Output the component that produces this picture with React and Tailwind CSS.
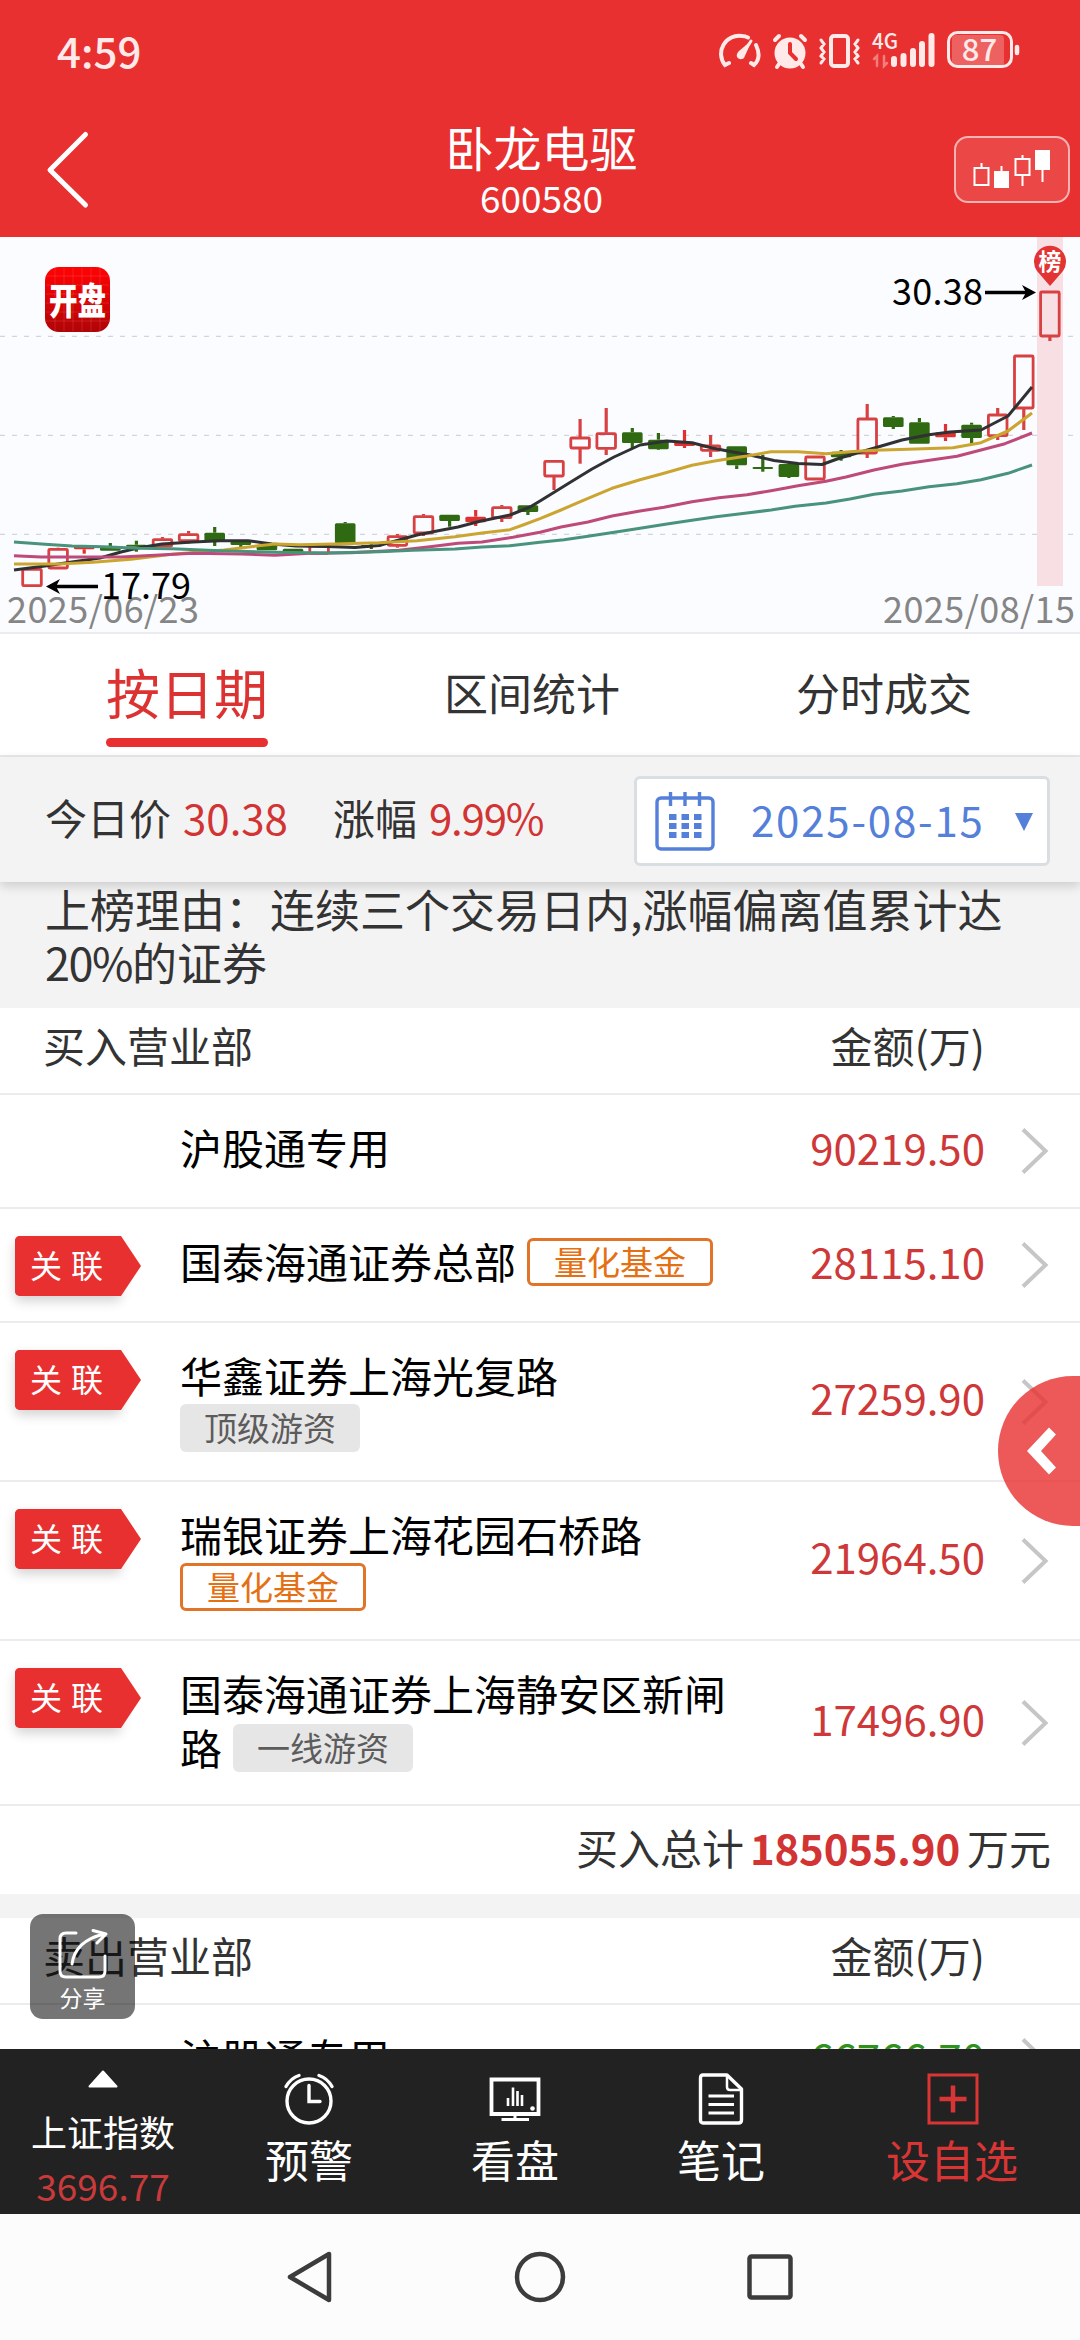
const FONT = "font-['Noto_Sans_CJK_SC','Noto_Sans',sans-serif]";

function StatusBar() {
  return (
    <div className="flex h-[104px] items-center justify-between pl-[57px] pr-[57px] text-[#ffe9e9]">
      <span className="pb-[4px] text-[42px] leading-none font-medium">4:59</span>
      <svg width="304" height="44" viewBox="0 0 304 44" fill="none" stroke="#ffe9e9" strokeLinecap="round">
        <g transform="translate(0 2)" strokeWidth="4">
          <path d="M10 31 L6 33 A18 18 0 0 1 23 4 Q26 4 29 5.500" />
          <path d="M37 13 Q43 26 35 33 L32 31" />
          <path d="M32 9 L23 23" strokeWidth="3" />
          <path d="M33 8 L25 26 Q21 29 18 25 Q17 22 20 19 Z" fill="#ffe9e9" stroke="none" />
        </g>
        <g transform="translate(54 2)">
          <circle cx="17" cy="21" r="15.500" fill="#ffe9e9" stroke="none" />
          <path d="M2 8 L6 4 M32 8 L28 4 M6 32 L4 35 M28 32 L30 35" strokeWidth="4" />
          <path d="M17 12 V21 L23 27" stroke="#e83030" strokeWidth="4" />
        </g>
        <g transform="translate(100 2)">
          <rect x="12" y="4" width="17" height="30" rx="3" strokeWidth="4" />
          <path d="M2 8 L5 12 L2 16 L5 20 L2 24 L5 27 L2 31 M39 8 L36 12 L39 16 L36 20 L39 24 L36 27 L39 31" strokeWidth="3" />
        </g>
        <text x="153" y="19" fontSize="22" fontWeight="500" fill="#ffe9e9" stroke="none" textLength="26" lengthAdjust="spacingAndGlyphs">4G</text>
        <path d="M155 29 L158 26 V36 M165 26 V36 L168 33" stroke="#f27e7e" strokeWidth="2.500" />
        <path d="M175 28 V33 M184.500 25 V33 M194 20 V33 M203 13 V33 M212.500 5 V33" transform="translate(0 1)" strokeWidth="6" />
        <rect x="233" y="5" width="52" height="32" rx="4" fill="#ee6161" stroke="none" />
        <rect x="229.500" y="2.500" width="63" height="34" rx="9" strokeWidth="3" />
        <path d="M298 17 V23" strokeWidth="4.500" />
        <text x="260.500" y="31" fontSize="31" fontWeight="500" textAnchor="middle" fill="#ffe9e9" stroke="none">87</text>
      </svg>
    </div>
  );
}

function Header() {
  return (
    <header className="h-[237px] bg-[#e83030] text-white">
      <StatusBar />
      <div className="flex h-[133px] items-start justify-between pr-[10px] pl-[44px]">
        <svg className="mt-[26px] mr-[37px]" width="48" height="80" viewBox="0 0 48 80" fill="none" stroke="#fff" strokeWidth="5" strokeLinecap="round" strokeLinejoin="round">
          <path d="M41.500 4.500 L6 40 L41.500 75" />
        </svg>
        <div className="flex flex-col items-center">
          <h1 className="mt-[14px] text-[48px] leading-[56px]">卧龙电驱</h1>
          <span className="mt-[3px] text-[37px] leading-[40px]">600580</span>
        </div>
        <svg className="mt-[32px]" width="116" height="67" viewBox="0 0 116 67">
          <rect x="1" y="1" width="114" height="65" rx="13" fill="#eb4747" stroke="#f6b3b3" strokeWidth="2" />
          <g fill="none" stroke="#fff" strokeWidth="2">
            <path d="M20.500 32 H34.500 V49 H20.500 Z M27.500 32 V27 M61.500 23 H75.500 V39 H61.500 Z M68.500 23 V19 M68.500 39 V50" />
            <path d="M40 35 H55 V52 H40 Z M81 14 H96 V34 H81 Z" fill="#fff" stroke="none" />
            <path d="M47.500 36 V30 M88.500 30 V46" />
          </g>
        </svg>
      </div>
    </header>
  );
}

// kind (r: hollow red, R: solid red, g: green), body top, body bottom, wick high, wick low
const candles = [
  ["r", 331.3, 349.7, 331.3, 349.7], ["r", 311.3, 332, 310.7, 332], ["R", 308.3, 312.3, 308.3, 316.7],
  ["g", 309, 313.7, 306, 313.7], ["g", 307.7, 309.7, 303.7, 314.7], ["r", 301.7, 310, 300, 310],
  ["r", 296.7, 304.7, 294, 306.3], ["g", 295.7, 304.3, 290, 309], ["g", 304.3, 308, 303, 310.7],
  ["g", 307.7, 313.3, 307.7, 313.3], ["g", 311.7, 317.3, 311.7, 317.3], ["r", 308, 317.3, 307, 317.3],
  ["g", 286.3, 306.3, 285, 306.3], ["g", 308, 309.7, 306.3, 312], ["r", 298.7, 309.3, 297, 310.7],
  ["r", 278.7, 297, 277, 299], ["g", 277.7, 284, 277.7, 289.7], ["R", 279.7, 285.3, 273, 289],
  ["r", 269.7, 281.7, 268, 285], ["g", 268.3, 275, 268.3, 278], ["r", 223.3, 240, 223.3, 253],
  ["r", 200, 212, 182, 226.7], ["r", 195.7, 212.3, 171, 218], ["g", 195.3, 206, 191, 211.7],
  ["g", 202.7, 212.3, 196, 213], ["R", 205, 209, 193, 211], ["r", 208, 214.3, 198, 220],
  ["g", 209.3, 228.3, 209.3, 232], ["g", 230, 232, 217.7, 234.7], ["g", 227, 240, 226.3, 241],
  ["r", 219, 243, 219, 243], ["g", 214.7, 220.3, 213, 223.7], ["r", 181, 217, 167, 221],
  ["g", 180.3, 190, 179, 192], ["g", 185.3, 206.7, 181, 206.7], ["R", 195.3, 200.3, 187, 204],
  ["g", 187.7, 201, 185.7, 206.3], ["r", 177, 199.7, 171, 203], ["r", 118, 172, 118, 193],
  ["r", 54, 100, 54, 104],
];

const averages = [
  ["#2f3133", "14,333 45,329 72,325 100,321 121,315 138,311 162,307 193,305 220,303.700 248,303.700 272,307 296,309 327,309.500 355,310.500 379,308.500 399,303 417,298 437,294 458,290 479,284.500 510,278 530,270 540,264 574,243 592,232 614,220 640,208 667,204 692,205.700 712,211 733,215 750,218 774,223.500 798,226.500 822,227.500 840,221 871,212 902,203 929,197.700 950,195 981,193 1008,179 1032,150"],
  ["#cba52f", "14,327 59,327 93,325.300 131,322.300 172,317.300 224,313 251,309.700 275,307 300,307.700 334,307 379,305.700 417,303.700 455,299.700 482,296 510,292.700 523,288 540,281.700 561,273 588,261.300 612,251.300 640,242.700 664,236.300 692,228.300 716,223.700 747,219 771,214.700 798,214.700 826,216.700 850,214.700 874,213.300 908,212.300 953,210.700 981,205.700 1008,194 1032,176"],
  ["#be4a79", "14,318.700 41,320 121,320 155,318.300 193,316.300 241,317 275,318.300 310,316.300 351,315.700 399,313.300 430,309.700 458,306.300 482,305 513,300.300 540,295.300 561,290 588,285 612,279 640,274 664,270.300 692,264.700 719,260.700 747,257.700 771,253.700 798,248.700 826,244.300 846,240 874,233 902,227.300 926,223.700 957,219.300 981,213 1005,206.700 1032,196"],
  ["#49937c", "14,305 45,307.300 72,309 103,309.700 138,311.300 172,311.700 220,313.700 275,315.300 327,316 379,314.700 413,313.300 455,312 482,310 510,308.700 540,305.300 564,302.700 588,299.300 616,295 640,291.300 667,287 692,283.300 716,279.700 747,276 771,273 795,269.300 826,266 850,262 874,257.300 902,254 929,249.700 957,246.700 981,242.700 1008,236.300 1032,228"],
];

function Candle({ data, index }) {
  const [kind, top, bottom, high, low] = data;
  const cx = 32 + index * 26.1;
  const color = kind === "g" ? "#2f6912" : kind === "R" ? "#e0302f" : "#d84141";
  return (
    <g stroke={color} strokeWidth="3.200">
      {high < top && <path d={`M${cx} ${high} V${top}`} />}
      {low > bottom && <path d={`M${cx} ${bottom} V${low}`} />}
      {kind === "r" ? (
        <rect x={cx - 9.3} y={top + 1} width="18.6" height={bottom - top - 2} rx="1" fill="none" strokeWidth="2.800" />
      ) : (
        <rect x={cx - 10.3} y={top} width="20.6" height={bottom - top} rx="1.500" fill={color} stroke="none" />
      )}
    </g>
  );
}

function PriceChart() {
  return (
    <section className="h-[397px] border-b-2 border-[#ececee] bg-[#fbfcff]">
      <svg className={FONT} width="1080" height="395" viewBox="0 0 1080 395" fill="none">
        <path d="M0 99.300 H1080 M0 198.300 H1080 M0 297.300 H1080" stroke="#c9cbd0" strokeWidth="1" strokeDasharray="5 7" />
        <rect x="1037" y="0" width="26" height="349" fill="#f7dfe4" />
        {candles.map((c, i) => <Candle key={i} data={c} index={i} />)}
        {averages.map(([color, points]) => (
          <polyline key={color} points={points} stroke={color} strokeWidth="3" strokeLinejoin="round" />
        ))}
        <defs>
          <linearGradient id="logo" x1="0" y1="0" x2="0" y2="1">
            <stop offset="0.100" stopColor="#fb0204" />
            <stop offset="1" stopColor="#b00406" />
          </linearGradient>
        </defs>
        <rect x="45" y="30" width="65" height="65" rx="14" fill="url(#logo)" />
        <path d="M55 31 V94 M64 31 V94 M73 31 V94 M82 31 V94 M91 31 V94 M100 31 V94 M46 39 H109 M46 48 H109 M46 57 H109 M46 66 H109 M46 75 H109 M46 84 H109" stroke="#fff" strokeOpacity="0.120" />
        <text x="49" y="78" fontSize="37" fontWeight="900" fill="#fff" textLength="57" lengthAdjust="spacingAndGlyphs">开盘</text>
        <path d="M1050 49 L1037 34 A16 16 0 1 1 1063 34 Z" fill="#e23434" />
        <text x="1050" y="33" fontSize="23" fontWeight="700" fill="#fff" textAnchor="middle">榜</text>
        <path d="M50 349.500 H98 M985 55.500 H1032" stroke="#000" strokeWidth="3.500" />
        <path d="M46 349.500 L60 342 L56 349.500 L60 357 Z M1036 55.500 L1022 48 L1026 55.500 L1022 63 Z" fill="#000" />
        <text x="7" y="386" fontSize="36" fill="#858585" textLength="192">2025/06/23</text>
        <text x="883" y="386" fontSize="36" fill="#858585" textLength="192">2025/08/15</text>
        <text x="101" y="362" fontSize="36" fill="#000" textLength="90">17.79</text>
        <text x="892" y="68" fontSize="36" fill="#000" textLength="91">30.38</text>
      </svg>
    </section>
  );
}

function Tabs() {
  return (
    <nav className="flex h-[123px] gap-[176px] border-b-2 border-[#e9e9e9] bg-white pl-[106px] text-[44px] leading-[117px] text-[#333]">
      <div className="relative text-[54px] leading-[115px] text-[#dc3232]">
        按日期
        <span className="absolute bottom-[8px] left-0 h-[9px] w-full rounded-full bg-[#e83030]" />
      </div>
      <div>区间统计</div>
      <div>分时成交</div>
    </nav>
  );
}

function CalendarIcon() {
  return (
    <svg width="60" height="62" viewBox="0 0 60 62" fill="none" stroke="#5580da" strokeWidth="3.400">
      <rect x="2" y="8" width="56" height="51" rx="4" />
      <path d="M15.500 2 V16 M30 2 V16 M44.500 2 V16" />
      <path d="M14 27 H47 M14 36 H47 M14 45 H47" strokeWidth="5.800" strokeDasharray="7.500 5" />
    </svg>
  );
}

function DateBar() {
  return (
    <div className="relative z-10 flex h-[125px] items-center bg-[#f3f3f3] pr-[30px] pl-[45px] text-[42px] leading-none text-[#333] shadow-[0_4px_10px_rgba(0,0,0,0.16)]">
      <div className="flex pb-[6px]">
        <span>今日价</span>
        <span className="ml-[12px] text-[#d23434]">30.38</span>
        <span className="ml-[45px]">涨幅</span>
        <span className="ml-[12px] tracking-[-1.200px] text-[#d23434]">9.99%</span>
      </div>
      <div className="mt-[3px] ml-auto flex h-[90px] w-[416px] items-center rounded-[6px] border-[3px] border-[#d9dee3] bg-white pl-[18px] text-[#5580da]">
        <CalendarIcon />
        <span className="ml-[36px] pb-[5px] tracking-[1.800px]">2025-08-15</span>
        <svg className="mt-[2px] mr-[13px] ml-auto" width="20" height="20" viewBox="0 0 20 20">
          <path d="M1 1 H19 L10 19 Z" fill="#5580da" />
        </svg>
      </div>
    </div>
  );
}

function RelatedTag() {
  return (
    <div className="h-[60px] w-[106px] rounded-[5px] bg-[#e83030] shadow-[0_5px_12px_rgba(0,0,0,0.18)]">
      <div className="h-[60px] w-[126px] rounded-l-[5px] bg-[#e83030] pl-[15px] text-[32px] leading-[56px] tracking-[9px] whitespace-nowrap text-white [clip-path:polygon(0_0,106px_0,126px_30px,106px_60px,0_60px)]">
        关联
      </div>
    </div>
  );
}

function Badge({ kind, children }) {
  const tone = kind === "fund" ? "w-[186px] border-[3px] border-[#e0752a] text-[#e57014] leading-[41px]" : "w-[180px] bg-[#e6e6e6] text-[#5c5c5c] leading-[46px]";
  return <span className={`inline-block h-[48px] rounded-[6px] text-center align-middle text-[33px] ${tone}`}>{children}</span>;
}

function Chevron() {
  return (
    <svg className="mt-[5px] ml-[36px]" width="28" height="46" viewBox="0 0 28 46" fill="none" stroke="#c6c6c6" strokeWidth="4">
      <path d="M2 1.500 L24.500 23 L2 44.500" />
    </svg>
  );
}

function SeatRow({ height, related, name, badge, kind, stacked, amount, sell }) {
  return (
    <div className={`flex border-b-2 border-[#ececec] ${height}`}>
      <div className="w-[180px] shrink-0 pt-[27px] pl-[15px]">{related && <RelatedTag />}</div>
      <div className="w-[562px] shrink-0 pt-[25px] text-[42px] leading-[54px] text-black">
        {name}
        {stacked ? (
          <div className="flex pt-[2px]">
            <Badge kind={kind}>{badge}</Badge>
          </div>
        ) : (
          badge && <span className="mt-px ml-[11px] inline-flex h-[54px] items-center align-top"><Badge kind={kind}>{badge}</Badge></span>
        )}
      </div>
      <div className="flex flex-1 items-center justify-end pr-[31px] pb-[5px]">
        <span className={`pb-[4px] text-[42px] leading-none ${sell ? "text-[#2f921c]" : "text-[#cf3838]"}`}>{amount}</span>
        <Chevron />
      </div>
    </div>
  );
}

function TableHead({ label }) {
  return (
    <div className="flex h-[87px] justify-between border-b-2 border-[#ececec] pr-[95px] pl-[43px] text-[42px] leading-[74px] text-[#333]">
      <span>{label}</span>
      <span>金额(万)</span>
    </div>
  );
}

function BottomItem({ width, label, color, children }) {
  return (
    <div className={`flex flex-col items-center ${width} ${color}`}>
      <div className="flex h-[58px] w-[56px] items-center justify-center pt-px">{children}</div>
      <span className="text-[44px] leading-[64px]">{label}</span>
    </div>
  );
}

function BottomBar() {
  return (
    <div className="flex h-[165px] bg-[#222]">
      <div className="flex w-[206px] flex-col items-center text-white">
        <svg className="mt-[21px]" width="30" height="18" viewBox="0 0 30 18">
          <path d="M15 1.500 L28.500 16.500 H1.500 Z" fill="#fff" stroke="#fff" strokeWidth="2" strokeLinejoin="round" />
        </svg>
        <span className="mt-[19px] text-[36px] leading-[48px]">上证指数</span>
        <span className="mt-[8px] text-[37px] leading-[44px] text-[#c93a3a]">3696.77</span>
      </div>
      <div className="flex pt-[20px]">
        <BottomItem width="w-[206px]" label="预警" color="text-white">
          <svg width="52" height="54" viewBox="0 0 52 54" fill="none" stroke="#fff" strokeWidth="3.400" strokeLinecap="round">
            <circle cx="26" cy="29" r="22" />
            <path d="M26 13.500 V29.500 H37" />
            <path d="M3 14.500 Q8 6 16 3.500 M49 14.500 Q44 6 36 3.500" />
          </svg>
        </BottomItem>
        <BottomItem width="w-[206px]" label="看盘" color="text-white">
          <svg width="52" height="46" viewBox="0 0 52 46" fill="none" stroke="#fff" strokeWidth="3.800">
            <path d="M2.500 3.500 H49.500 V38 H2.500 Z" />
            <path d="M26 39 V44 M12.500 43.500 H40" strokeWidth="3" />
            <path d="M19 22 V30 M24 11.500 V30 M28.500 15 V30 M33 19 V30" strokeWidth="2.600" />
            <circle cx="43.500" cy="32.500" r="2.300" fill="#fff" stroke="none" />
          </svg>
        </BottomItem>
        <BottomItem width="w-[206px]" label="笔记" color="text-white">
          <svg width="46" height="54" viewBox="0 0 46 54" fill="none" stroke="#fff" strokeWidth="3.400" strokeLinejoin="round">
            <path d="M5 3 H29 L43.500 17 V48 Q43.500 51 40.500 51 H5 Q2.500 51 2.500 48 V6 Q2.500 3 5 3 Z" />
            <path d="M29 4 V15 Q29 18 32 18 H43" strokeWidth="2.500" />
            <path d="M10.500 24 H36 M10.500 32.500 H36 M10.500 41 H36" strokeWidth="2.800" />
          </svg>
        </BottomItem>
        <BottomItem width="w-[256px]" label="设自选" color="text-[#d93535]">
          <svg className="ml-px" width="52" height="52" viewBox="0 0 52 52" fill="none" stroke="#d93535" strokeWidth="3">
            <path d="M2 2 H50 V50 H2 Z" />
            <path d="M26 12.500 V39.500 M12.500 26 H39.500" strokeWidth="4.500" />
          </svg>
        </BottomItem>
      </div>
    </div>
  );
}

function SystemNav() {
  return (
    <div className="flex h-[126px] items-center justify-center gap-[179px] bg-[#fcfcfc]">
      <svg width="50" height="52" viewBox="0 0 50 52" fill="none" stroke="#3c3c3c" strokeWidth="4.500" strokeLinejoin="round">
        <path d="M44 3 V49 L5 26 Z" />
      </svg>
      <svg width="52" height="52" viewBox="0 0 52 52" fill="none" stroke="#3c3c3c" strokeWidth="4.500">
        <circle cx="26" cy="26" r="23" />
      </svg>
      <svg width="50" height="52" viewBox="0 0 50 52" fill="none" stroke="#3c3c3c" strokeWidth="4.500" strokeLinejoin="round">
        <rect x="4.500" y="5.500" width="41" height="41" rx="2" />
      </svg>
    </div>
  );
}

export default function App() {
  return (
    <div className={`relative flex h-[2340px] w-[1080px] flex-col overflow-hidden bg-white ${FONT}`}>
      <Header />
      <PriceChart />
      <Tabs />
      <DateBar />
      <main className="h-[1167px] overflow-hidden">
        <p className="h-[126px] bg-[#f3f3f3] pr-[60px] pl-[45px] text-[45px] leading-[53px] whitespace-nowrap text-[#333]">
          上榜理由：连续三个交易日内,涨幅偏离值累计达<br /><span className="tracking-[-1.500px]">20%</span>的证券
        </p>
        <TableHead label="买入营业部" />
        <SeatRow height="h-[114px]" name="沪股通专用" amount="90219.50" />
        <SeatRow height="h-[114px]" related name="国泰海通证券总部" badge="量化基金" kind="fund" amount="28115.10" />
        <SeatRow height="h-[159px]" related name="华鑫证券上海光复路" badge="顶级游资" stacked amount="27259.90" />
        <SeatRow height="h-[159px]" related name="瑞银证券上海花园石桥路" badge="量化基金" kind="fund" stacked amount="21964.50" />
        <SeatRow height="h-[165px]" related name="国泰海通证券上海静安区新闸路" badge="一线游资" amount="17496.90" />
        <div className="flex h-[88px] justify-end pr-[29px] text-[42px] leading-[82px] text-[#333]">
          <span>买入总计</span>
          <b className="mr-[7px] ml-[6px] tracking-[-0.200px] text-[#d23434]">185055.90</b>
          <span>万元</span>
        </div>
        <div className="h-[24px] bg-[#f3f3f3]" />
        <TableHead label="卖出营业部" />
        <SeatRow height="h-[114px]" name="沪股通专用" amount="66766.70" sell />
      </main>
      <BottomBar />
      <SystemNav />

      <div className="absolute top-[1914px] left-[30px] flex h-[105px] w-[105px] flex-col items-center rounded-[13px] bg-black/54 text-white">
        <svg className="mt-[14px]" width="50" height="52" viewBox="0 0 50 52" fill="none" stroke="#fff" strokeWidth="3" strokeLinecap="round" strokeLinejoin="round">
          <path d="M18 5 H8 Q2 5 2 11 V43 Q2 49 8 49 H41 Q47 49 47 43 V28" />
          <path d="M14 36 Q17 13 46 6 M35 2.500 L48 6 L39 15" />
        </svg>
        <span className="mt-[2px] text-[23px] leading-[30px]">分享</span>
      </div>
      <div className="absolute top-[1376px] left-[998px] h-[150px] w-[82px] rounded-l-[75px] bg-[#e83030]/80">
        <svg className="mt-[50px] ml-[27px]" width="36" height="50" viewBox="0 0 36 50">
          <path d="M24 1.500 L31 8.500 L16 25 L31 41.500 L24 48.500 L2 25 Z" fill="#fff" />
        </svg>
      </div>
    </div>
  );
}
